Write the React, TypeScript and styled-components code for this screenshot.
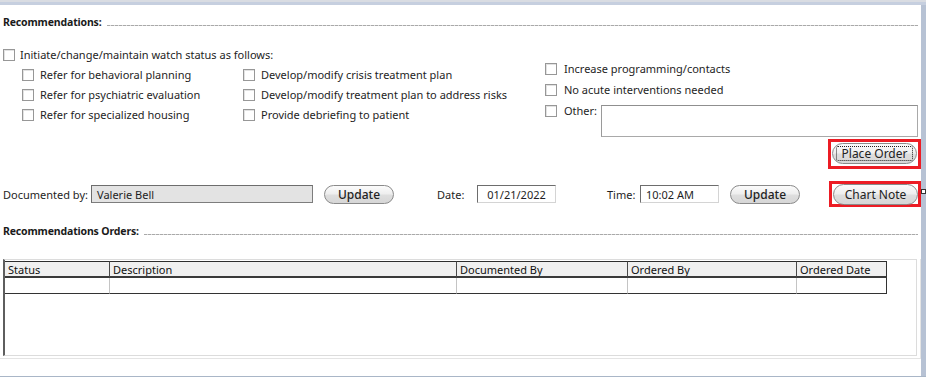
import React from "react";
import styled, { createGlobalStyle } from "styled-components";

const Global = createGlobalStyle`
  html, body { margin: 0; padding: 0; background: #fff; }
  body { font-family: "Noto Sans", "Segoe UI", sans-serif; }
  * { box-sizing: border-box; }
`;

const Frame = styled.div`
  position: relative;
  width: 926px;
  height: 377px;
  padding: 5px 5px 1px 0;
  background: linear-gradient(#d9dce2 0 2px, #c6cfdf 2px 5px, #b7c2d4 5px);
  border-bottom: 1px solid #a9b6c7;
`;

const Panel = styled.div`
  width: 921px;
  height: 371px;
  background: #fff;
  padding: 10px 0 0 3px;
  display: flex;
  flex-direction: column;
  color: #1c1c1c;
  font-size: 11px;
`;

const SectionHead = styled.div<{ $mt?: number }>`
  display: flex;
  align-items: center;
  height: 14px;
  margin-top: ${(p) => p.$mt ?? 0}px;
  padding-right: 3px;
`;

const SectionTitle = styled.span`
  font-weight: 700;
  font-size: 10.5px;
  letter-spacing: -0.15px;
  line-height: 14px;
  color: #1a1a1a;
  white-space: nowrap;
`;

const Dashes = styled.div`
  flex: 1;
  height: 1px;
  margin: 6px 0 0 5px;
  background: repeating-linear-gradient(90deg, #a9a9a9 0 3px, #dcdcdc 3px 4px);
`;

const CheckArea = styled.div`
  display: flex;
  margin-top: 18px;
`;

const LeftBlock = styled.div`
  width: 542px;
  display: flex;
  flex-direction: column;
`;

const MainRow = styled.div`
  height: 16px;
  display: flex;
  align-items: center;
`;

const SubGrid = styled.div`
  display: grid;
  grid-template-columns: 221px 1fr;
  grid-template-rows: repeat(3, 20px);
  grid-auto-flow: column;
  margin: 2px 0 0 19px;
`;

const RightBlock = styled.div`
  flex: 1;
  display: flex;
  flex-direction: column;
  padding-top: 11px;
`;

const Item = styled.label<{ $h?: number; $gap?: number }>`
  display: flex;
  align-items: center;
  height: ${(p) => p.$h ?? 20}px;
  gap: ${(p) => p.$gap ?? 6}px;
  white-space: nowrap;
  color: #1e1e24;
  line-height: 14px;
`;

const Box = styled.span`
  flex: none;
  width: 12px;
  height: 12px;
  border: 1px solid #979797;
  background: #fff;
  box-shadow: inset 1px 1px 0 #e2e2e2;
`;

const OtherRow = styled.div`
  display: flex;
  align-items: flex-start;
`;

const OtherText = styled.div`
  width: 317px;
  height: 32px;
  margin: 5px 0 0 4px;
  border: 1px solid #a9a9a9;
  border-top-color: #8f8f8f;
  border-left-color: #9a9a9a;
  background: #fff;
`;

const ButtonRow = styled.div`
  display: flex;
  justify-content: flex-end;
  margin-top: 2px;
`;

const RedBox = styled.div<{ $w: number; $h: number; $pt: number }>`
  width: ${(p) => p.$w}px;
  height: ${(p) => p.$h}px;
  border: 3px solid #ec1c24;
  padding: ${(p) => p.$pt}px 0 0 1px;
  display: flex;
  align-items: flex-start;
`;

const PillButton = styled.div<{ $w: number; $h: number; $focus?: boolean; $weight?: number; $fs?: number }>`
  position: relative;
  width: ${(p) => p.$w}px;
  height: ${(p) => p.$h}px;
  border: 1px solid #8a8a8a;
  border-radius: ${(p) => p.$h / 2}px;
  background: linear-gradient(#fbfbfb 0%, #efefef 45%, #dedede 55%, #d6d6d6 100%);
  display: flex;
  align-items: center;
  justify-content: center;
  font-size: ${(p) => p.$fs ?? 12}px;
  font-weight: ${(p) => p.$weight ?? 500};
  color: #222;
  white-space: nowrap;
  flex: none;
  &::after {
    content: "";
    display: ${(p) => (p.$focus ? "block" : "none")};
    position: absolute;
    inset: 2px 3px;
    border: 1px dotted #222;
    border-radius: 2px;
  }
`;

const DocRow = styled.div`
  display: flex;
  align-items: center;
  height: 26px;
  margin-top: 12px;
`;

const FieldLabel = styled.span<{ $w: number; $ml?: number }>`
  width: ${(p) => p.$w}px;
  margin-left: ${(p) => p.$ml ?? 0}px;
  flex: none;
  white-space: nowrap;
  color: #1e1e24;
`;

const Field = styled.div<{ $w: number; $grey?: boolean; $center?: boolean }>`
  width: ${(p) => p.$w}px;
  height: 18px;
  flex: none;
  display: flex;
  align-items: center;
  justify-content: ${(p) => (p.$center ? "center" : "flex-start")};
  padding-left: ${(p) => (p.$center ? 0 : 5)}px;
  background: ${(p) => (p.$grey ? "#e3e3e3" : "#fff")};
  border: 1px solid ${(p) => (p.$grey ? "#7d7d7d" : "#d4d4d4")};
  border-top-color: #6d6d6d;
  border-left-color: #6d6d6d;
  color: #1e1e24;
  white-space: nowrap;
`;

const Spacer = styled.div<{ $w: number }>`
  width: ${(p) => p.$w}px;
  flex: none;
`;

const Grow = styled.div`
  flex: 1;
`;

const TableWrap = styled.div`
  margin: 21px 0 0 -3px;
  width: 921px;
  border-right: 1px solid #e4e4e4;
  border-bottom: 1px solid #e4e4e4;
  padding: 0 3px 2px 3px;
`;

const TableFrame = styled.div`
  height: 97px;
  border-top: 1px solid #dcdcdc;
  border-left: 2px solid #5e5e5e;
  border-right: 1px solid #dcdcdc;
  border-bottom: 1px solid #dcdcdc;
  padding-top: 1px;
`;

const Grid = styled.div`
  display: grid;
  grid-template-columns: 105px 347px 171px 169px 90px;
  width: 882px;
`;

const HeadCell = styled.div<{ $last?: boolean }>`
  height: 17px;
  background: #f0f0f0;
  border-top: 1px solid #2e2e2e;
  border-bottom: 2px solid #3a3a3a;
  border-right: 1px solid ${(p) => (p.$last ? "#333" : "#4a4a4a")};
  padding-left: 3px;
  font-size: 11px;
  line-height: 15px;
  color: #111;
  white-space: nowrap;
  overflow: hidden;
`;

const DataCell = styled.div<{ $last?: boolean }>`
  height: 16px;
  border-bottom: 1px solid #333;
  border-right: 1px solid ${(p) => (p.$last ? "#333" : "#c4c4c4")};
`;

const Handle = styled.div`
  position: absolute;
  left: 921px;
  top: 189px;
  width: 5px;
  height: 5px;
  background: #fff;
  border: 1px solid #333;
`;

const Check = ({ label, h, gap }: { label: string; h?: number; gap?: number }) => (
  <Item $h={h} $gap={gap}>
    <Box />
    <span>{label}</span>
  </Item>
);

const columns = ["Status", "Description", "Documented By", "Ordered By", "Ordered Date"];

export default function App() {
  return (
    <>
      <Global />
      <Frame>
        <Panel>
          <SectionHead>
            <SectionTitle>Recommendations:</SectionTitle>
            <Dashes />
          </SectionHead>

          <CheckArea>
            <LeftBlock>
              <MainRow>
                <Check label="Initiate/change/maintain watch status as follows:" h={16} gap={5} />
              </MainRow>
              <SubGrid>
                <Check label="Refer for behavioral planning" />
                <Check label="Refer for psychiatric evaluation" />
                <Check label="Refer for specialized housing" />
                <Check label="Develop/modify crisis treatment plan" />
                <Check label="Develop/modify treatment plan to address risks" />
                <Check label="Provide debriefing to patient" />
              </SubGrid>
            </LeftBlock>
            <RightBlock>
              <Check label="Increase programming/contacts" h={21} gap={7} />
              <Check label="No acute interventions needed" h={21} gap={7} />
              <OtherRow>
                <Check label="Other:" h={21} gap={7} />
                <OtherText />
              </OtherRow>
            </RightBlock>
          </CheckArea>

          <ButtonRow>
            <RedBox $w={93} $h={30} $pt={1}>
              <PillButton $w={85} $h={21} $focus $weight={400} $fs={12}>
                Place Order
              </PillButton>
            </RedBox>
          </ButtonRow>

          <DocRow>
            <FieldLabel $w={88}>Documented by:</FieldLabel>
            <Field $w={222} $grey>
              Valerie Bell
            </Field>
            <Spacer $w={11} />
            <PillButton $w={70} $h={19}>
              Update
            </PillButton>
            <FieldLabel $w={40} $ml={43}>
              Date:
            </FieldLabel>
            <Field $w={79} $center>
              01/21/2022
            </Field>
            <FieldLabel $w={33} $ml={51}>
              Time:
            </FieldLabel>
            <Field $w={79}>10:02 AM</Field>
            <Spacer $w={11} />
            <PillButton $w={70} $h={19}>
              Update
            </PillButton>
            <Grow />
            <RedBox $w={92} $h={26} $pt={0}>
              <PillButton $w={85} $h={21} $weight={400} $fs={12}>
                Chart Note
              </PillButton>
            </RedBox>
          </DocRow>

          <SectionHead $mt={17}>
            <SectionTitle>Recommendations Orders:</SectionTitle>
            <Dashes />
          </SectionHead>

          <TableWrap>
            <TableFrame>
              <Grid>
                {columns.map((c, i) => (
                  <HeadCell key={c} $last={i === columns.length - 1}>
                    {c}
                  </HeadCell>
                ))}
                {columns.map((c, i) => (
                  <DataCell key={c + "-d"} $last={i === columns.length - 1} />
                ))}
              </Grid>
            </TableFrame>
          </TableWrap>
        </Panel>
        <Handle />
      </Frame>
    </>
  );
}
